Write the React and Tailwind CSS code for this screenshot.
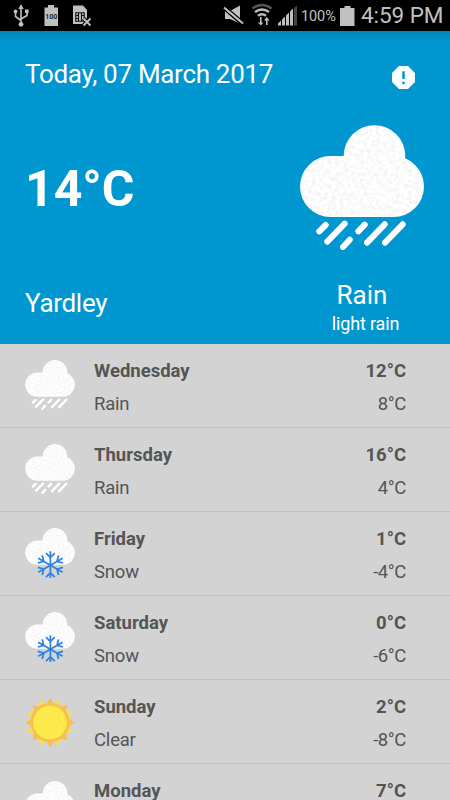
import clsx from 'clsx'

const forecast = [
  { day: 'Wednesday', condition: 'Rain', high: '12°C', low: '8°C' },
  { day: 'Thursday', condition: 'Rain', high: '16°C', low: '4°C' },
  { day: 'Friday', condition: 'Snow', high: '1°C', low: '-4°C' },
  { day: 'Saturday', condition: 'Snow', high: '0°C', low: '-6°C' },
  { day: 'Sunday', condition: 'Clear', high: '2°C', low: '-8°C' },
  { day: 'Monday', condition: 'Rain', high: '7°C', low: '-1°C' },
]

// Paper-like grain shared by all weather icons
const Grain = ({ id }) => (
  <filter id={id} x="0" y="0" width="100%" height="100%" colorInterpolationFilters="sRGB">
    <feTurbulence type="fractalNoise" baseFrequency="0.25" numOctaves="2" result="noise" />
    <feColorMatrix in="noise" type="matrix" values="0 0 0 0 0.6  0 0 0 0 0.6  0 0 0 0 0.6  0.35 0 0 0 -0.14" />
    <feComposite in2="SourceGraphic" operator="in" result="grain" />
    <feMerge>
      <feMergeNode in="SourceGraphic" />
      <feMergeNode in="grain" />
    </feMerge>
  </filter>
)

const Cloud = ({ id }) => (
  <g fill="#fff" filter={`url(#${id})`}>
    <rect y="31" width="124" height="61" rx="30.5" />
    <circle cx="74.5" cy="31" r="30.8" />
  </g>
)

const RainIcon = ({ id, className }) => (
  <svg viewBox="0 0 124 125" className={className}>
    <Grain id={id} />
    <Cloud id={id} />
    <path
      d="M19.3 106.3L25.7 100M27.3 116.7L44.7 98.7M43 122L49.7 114.7M58.3 106.3L64.7 99.7M67 117.7L84.7 99.3M85 117.7L102.7 99.3"
      stroke="#fff"
      strokeWidth="6"
      strokeLinecap="round"
    />
  </svg>
)

const SnowIcon = ({ id, className }) => (
  <svg viewBox="0 0 124 125" className={className}>
    <Grain id={id} />
    <Cloud id={id} />
    <g stroke="#2f82e0" strokeWidth="4.4" fill="none">
      {[0, 60, 120, 180, 240, 300].map(angle => (
        <path key={angle} d="M63 93V58M52 63L63 74L74 63" transform={`rotate(${angle} 63 93)`} />
      ))}
    </g>
  </svg>
)

const SunIcon = ({ id, className }) => (
  <svg viewBox="0 0 124 125" className={clsx('overflow-visible', className)}>
    <Grain id={id} />
    <g filter={`url(#${id})`}>
      {[...Array(16).keys()].map(i => (
        <path key={i} d="M51 21L62 2L73 21Z" fill={i % 2 ? '#fde345' : '#fcc24a'} transform={`rotate(${i * 22.5} 62 64)`} />
      ))}
      <circle cx="62" cy="64" r="49" fill="#fcc24a" />
      <circle cx="62" cy="64" r="42" fill="#ffee48" />
    </g>
  </svg>
)

const icons = { Rain: RainIcon, Snow: SnowIcon, Clear: SunIcon }

const StatusBar = () => (
  <div className="flex h-[31px] shrink-0 items-center bg-black text-[#c0c0c0]">
    <svg viewBox="0 0 220 31" className="h-[31px] w-[220px]" fill="#c0c0c0">
      {/* USB */}
      <path d="M21 5V24M15.5 12V16.5L21 20.5M27 11V15.5L21 19" fill="none" stroke="#c0c0c0" strokeWidth="1.6" />
      <path d="M21 4.5L23.8 9H18.2Z" />
      <circle cx="15.5" cy="11.5" r="1.9" />
      <rect x="25" y="9.5" width="3.6" height="3.6" />
      <circle cx="21" cy="24.3" r="2.4" />
      {/* Battery */}
      <path d="M48 5H54V7.5H58V26H44.5V7.5H48Z" />
      <text x="51.2" y="18.8" fontSize="7" fontWeight="700" textAnchor="middle" fill="#222" className="font-['Roboto',sans-serif]">100</text>
      {/* SIM missing */}
      <path d="M73 5.5H83L87 10V18L84 24H73Z" />
      <path d="M75.8 12.8H84.2V21.2H75.8ZM78.5 13V21M81.5 13V21M76 15.5H78.5M76 18.5H78.5M81.5 15.5H84" fill="none" stroke="#111" strokeWidth="1.1" />
      <path d="M83.5 18.5L90.5 25.5M90.5 18.5L83.5 25.5" stroke="#000" strokeWidth="4" />
      <path d="M83.5 18.5L90.5 25.5M90.5 18.5L83.5 25.5" stroke="#c0c0c0" strokeWidth="1.9" />
    </svg>
    <svg viewBox="220 0 80 31" className="h-[31px] w-[80px]" fill="#c0c0c0">
      {/* Muted speaker */}
      <path d="M225 11H230L240 5.5V23.5L230 19H225Z" />
      <path d="M224 9.5L242 24.8" stroke="#000" strokeWidth="1.6" />
      <path d="M225 6.2L244 22.2" stroke="#000" strokeWidth="1.4" />
      <path d="M224 7.5L243 23.5" stroke="#c0c0c0" strokeWidth="2" />
      {/* Wifi */}
      <g fill="none" strokeWidth="2.4">
        <path d="M252.5 8.5Q262 1.5 271.5 8.5" stroke="#555" />
        <path d="M255 12Q262 6.8 269 12M258 15.8Q262 12.8 266 15.8" stroke="#c0c0c0" />
      </g>
      <path d="M260 17H261.6V22.5H263.3L260.8 25.5L258 22.5H260ZM266 25H267.6V20.5H269.5L266.8 17L264 20.5H266Z" />
      {/* Signal */}
      <path d="M278 25.5V23.5L281 20.5V25.5ZM282 25.5V19.5L285 16.5V25.5ZM286 25.5V15.5L289 12.5V25.5ZM290 25.5V11.5L293 8.5V25.5Z" />
      <path d="M294 25.5V8L297 5.5V25.5Z" fill="#444" />
    </svg>
    <span className="mt-[2px] ml-[1px] w-[39px] text-[14.5px] tracking-[-0.1px]">100%</span>
    <svg viewBox="0 0 15 22" className="h-[22px] w-[15px]" fill="#c0c0c0">
      <path d="M4.5 1H10.5V3H14.5V21H0V3H4.5Z" />
    </svg>
    <span className="ml-[6px] text-[22.5px] tracking-[-0.05px] whitespace-nowrap">4:59 PM</span>
  </div>
)

const ForecastRow = ({ day, condition, high, low }) => {
  const Icon = icons[condition]
  return (
    <li
      className={clsx(
        'flex h-[84.15px] shrink-0 items-center border-b border-[#c0c0c0] pr-[44px] pl-[25px]',
        'text-[18.5px] leading-[22px] text-[#555]',
      )}
    >
      <Icon id={`grain-${day}`} className="h-[50px] w-[50px]" />
      <div className="mt-[4px] ml-[19px] flex flex-1 flex-col gap-[11px]">
        <span className="font-bold">{day}</span>
        <span className="tracking-[-0.2px]">{condition}</span>
      </div>
      <div className="mt-[4px] flex flex-col gap-[11px] text-right">
        <span className="font-bold">{high}</span>
        <span className="tracking-[-0.4px]">{low}</span>
      </div>
    </li>
  )
}

export default function App() {
  return (
    <main className="flex h-[800px] w-[450px] flex-col overflow-hidden bg-[#d3d3d3] font-['Roboto',sans-serif]">
      <StatusBar />

      {/* Today */}
      <section className="flex h-[312.5px] shrink-0 flex-col bg-[#0097d0] bg-linear-to-b from-[#0087bb] to-[#0097d0] to-[12px] text-white">
        <header className="flex h-[94px] items-start justify-between pr-[34px] pl-[25px]">
          <h1 className="mt-[28px] text-[26px] leading-[30px] tracking-[-0.3px]">Today, 07 March 2017</h1>
          <svg viewBox="0 0 24 24" className="mt-[34px] h-[25px] w-[25px]">
            <path d="M7.7 1H16.3L23 7.7V16.3L16.3 23H7.7L1 16.3V7.7Z" fill="#fff" />
            <path d="M12 6V13.5M12 16V18.3" stroke="#0097d0" strokeWidth="2.4" />
          </svg>
        </header>
        <div className="flex h-[125px] items-center justify-between pr-[26px] pl-[25px]">
          <p className="mt-[2px] text-[50px] leading-[58px] font-bold">14°C</p>
          <RainIcon id="grain-today" className="h-[125px] w-[124px]" />
        </div>
        <footer className="flex flex-1 items-start justify-between pr-[25px] pl-[25px]">
          <p className="mt-[38px] text-[26px] leading-[30px] tracking-[-0.3px]">Yardley</p>
          <div className="mt-[30px] w-[119px] text-center">
            <p className="pr-[7px] text-[26px] leading-[30px]">Rain</p>
            <p className="mt-[3px] text-[18px] leading-[22px] tracking-[-0.15px]">light rain</p>
          </div>
        </footer>
      </section>

      <ul className="flex flex-col">
        {forecast.map(item => (
          <ForecastRow key={item.day} {...item} />
        ))}
      </ul>
    </main>
  )
}
